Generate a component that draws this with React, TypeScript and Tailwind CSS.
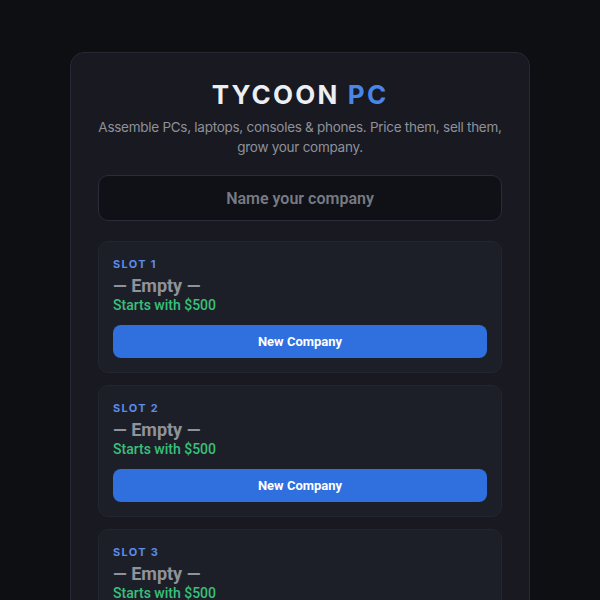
import React from 'react';

const slots = [1, 2, 3];

export default function App() {
  return (
    <div className="h-screen overflow-hidden bg-[#0e0f13] flex justify-center pt-[52px] px-4 font-['Inter','Noto_Sans',sans-serif]">
      <div className="w-[460px] self-start rounded-[14px] border border-[#262833] bg-[#181921] px-[27px] pt-[25px] pb-8">
        <h1 className="text-center text-[26px] leading-[34px] font-bold tracking-[0.085em] text-[#eceef2]">
          TYCOON <span className="text-[#4a86e8]">PC</span>
        </h1>
        <p className="-mx-2 mt-[5px] text-center text-[13.5px] leading-[20px] tracking-[-0.02em] text-[#8e919b]">
          Assemble PCs, laptops, consoles &amp; phones. Price them, sell them, grow your company.
        </p>

        <input
          placeholder="Name your company"
          className="mt-[18px] w-full h-[46px] rounded-[10px] border border-[#2a2c37] bg-[#101117] text-center text-[16px] font-semibold text-[#d0d2d8] placeholder:text-[#777a83] outline-none font-['Roboto',sans-serif]"
        />

        <div className="mt-5 flex flex-col gap-3">
          {slots.map((n) => (
            <div
              key={n}
              className="rounded-[10px] border border-[#23252f] bg-[#1d1f28] px-[14px] pt-[15px] pb-[14px] font-['Roboto',sans-serif]"
            >
              <div className="text-[11px] leading-[14px] font-bold tracking-[0.12em] text-[#5b8ce6] font-['Inter',sans-serif]">
                SLOT {n}
              </div>
              <div className="mt-[5px] text-[18px] leading-[20px] font-bold text-[#8f929b]">— Empty —</div>
              <div className="-mt-px text-[14px] leading-[20px] font-medium text-[#38c07a]">Starts with $500</div>
              <button className="mt-[10px] w-full h-[33px] rounded-[8px] bg-[#2f70de] text-[13px] font-bold text-white">
                New Company
              </button>
            </div>
          ))}
        </div>
      </div>
    </div>
  );
}
